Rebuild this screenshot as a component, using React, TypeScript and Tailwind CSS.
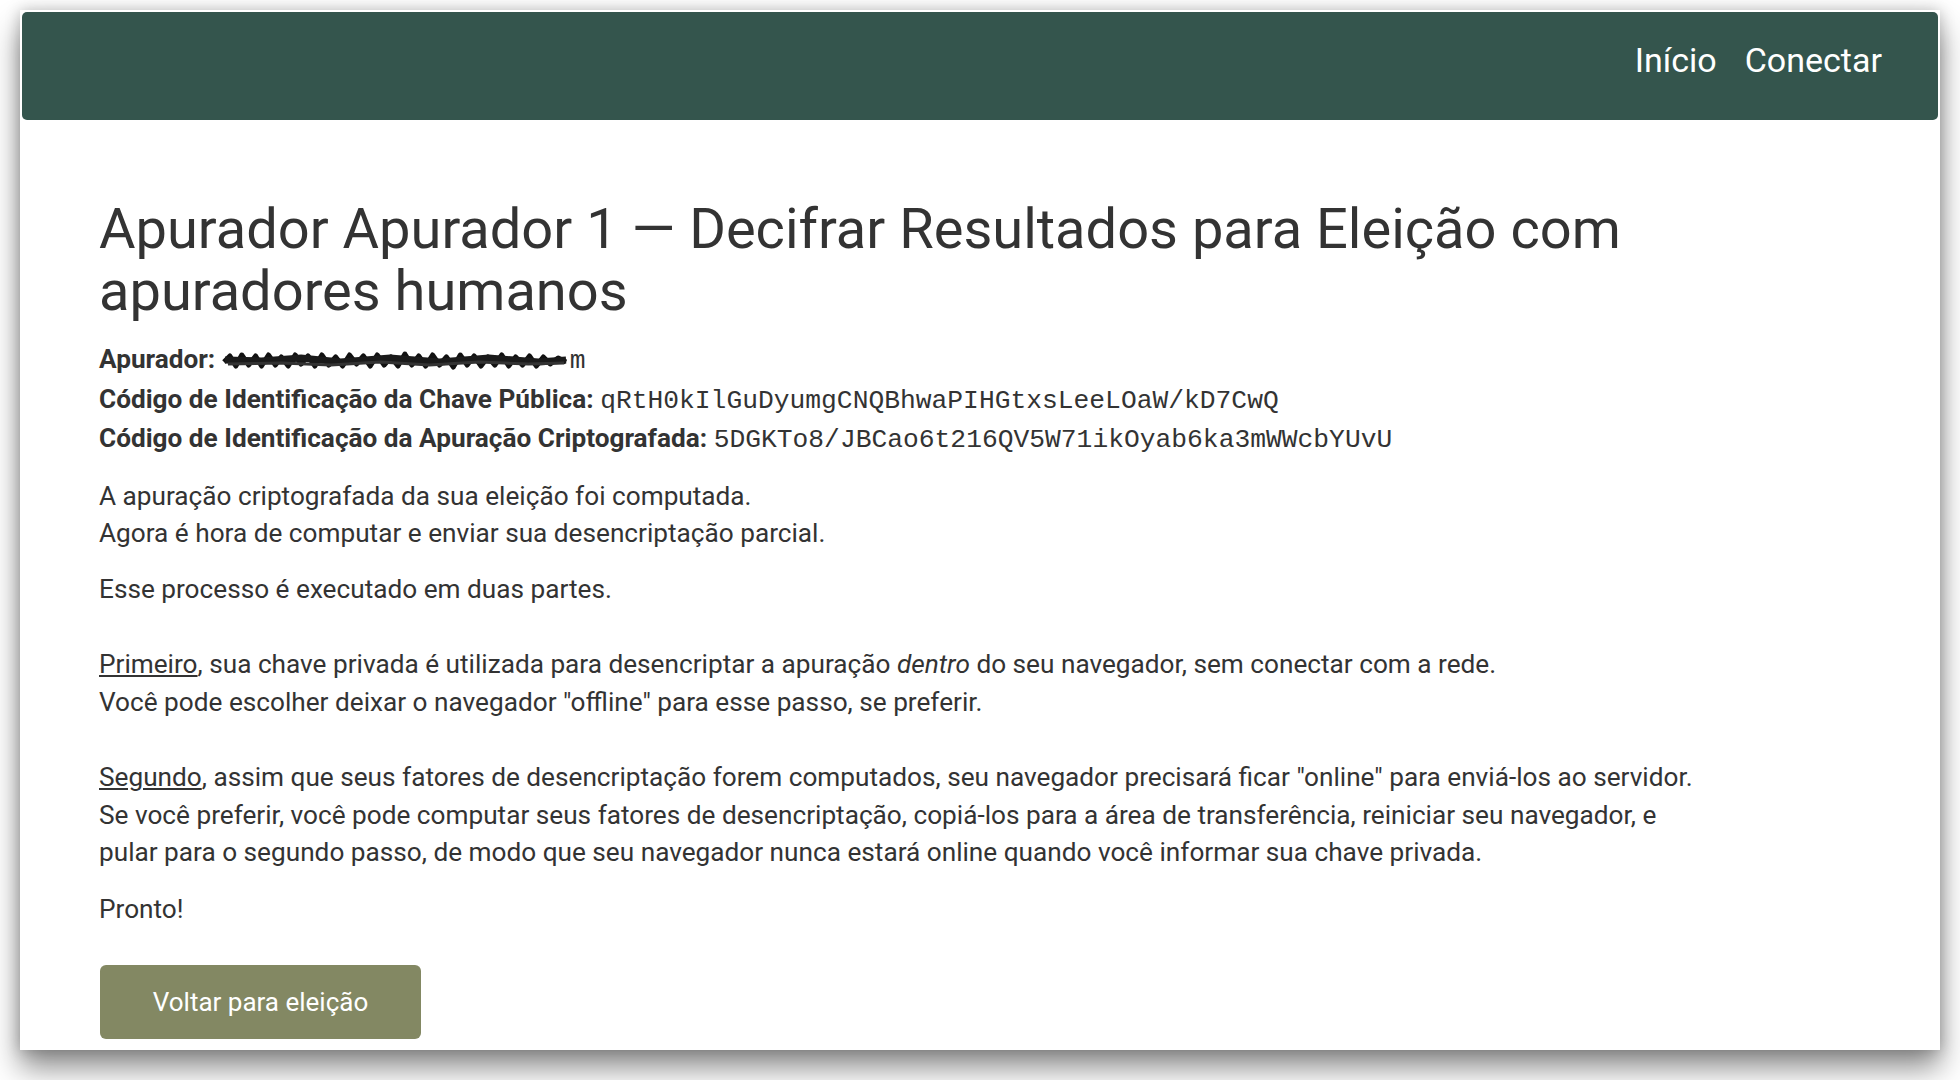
import React from 'react';

const body = "font-['Roboto','Liberation_Sans',sans-serif]";
const mono = "font-['Liberation_Mono',monospace] text-[26.3px] leading-none";

function Scribble() {
  // redacted e-mail: a black scribble drawn over the address
  return (
    <svg width="348" height="24" viewBox="0 0 352 24" preserveAspectRatio="none" className="inline-block align-[-5px]">
      <path
        d="M2 13 L8 7 L14 17 L20 6 L27 16 L34 7 L40 17 L47 6 L54 16 L60 8 L67 17 L74 6 L80 15 L87 7 L94 17 L101 6 L108 16 L115 8 L122 17 L129 6 L136 15 L143 7 L150 17 L157 6 L164 16 L171 8 L178 17 L185 5 L192 16 L199 7 L206 17 L213 6 L220 16 L227 8 L234 18 L241 6 L248 16 L255 7 L262 17 L269 8 L276 16 L283 6 L290 17 L297 8 L304 16 L311 7 L318 17 L325 8 L332 15 L340 9 L348 13"
        fill="none"
        stroke="#111"
        strokeWidth="5"
        strokeLinejoin="round"
      />
      <path
        d="M3 11 L40 12 L80 9 L120 13 L170 9 L220 13 L270 9 L320 13 L348 11"
        fill="none"
        stroke="#1a1a1a"
        strokeWidth="7"
      />
      <path
        d="M6 15 L60 14 L110 16 L160 13 L210 16 L260 13 L310 15 L346 14"
        fill="none"
        stroke="#333"
        strokeWidth="3"
      />
    </svg>
  );
}

export default function App() {
  return (
    <div className={`w-[1960px] h-[1080px] bg-white pt-[10px] px-[20px] ${body}`}>
      <div className="h-[1040px] bg-white shadow-[0_18px_28px_rgba(0,0,0,0.45),0_0_14px_rgba(0,0,0,0.22)] p-[2px]">
        {/* Top bar */}
        <header className="h-[108px] bg-[#34554d] rounded-[5px] flex items-center justify-end gap-[28px] pr-[56px] pb-[13px]">
          <a className="text-white text-[34px] leading-none">Início</a>
          <a className="text-white text-[34px] leading-none">Conectar</a>
        </header>

        <main className="px-[77px] pt-[78px] text-[#333]">
          <h1 className="text-[56px] leading-[62px] font-normal whitespace-nowrap">
            Apurador Apurador 1 — Decifrar Resultados para Eleição com
            <br />
            apuradores humanos
          </h1>

          <div className="mt-[18px] text-[26.2px] leading-[39.5px]">
            <div className="h-[39.5px]">
              <b>Apurador:</b>{' '}
              <span className={mono}>
                <Scribble />m
              </span>
            </div>
            <div className="h-[39.5px]">
              <b>Código de Identificação da Chave Pública:</b>{' '}
              <span className={mono}>qRtH0kIlGuDyumgCNQBhwaPIHGtxsLeeLOaW/kD7CwQ</span>
            </div>
            <div className="h-[39.5px]">
              <b>Código de Identificação da Apuração Criptografada:</b>{' '}
              <span className={mono}>5DGKTo8/JBCao6t216QV5W71ikOyab6ka3mWWcbYUvU</span>
            </div>
          </div>

          <div className="text-[26.2px] leading-[37.5px] whitespace-nowrap">
            <p className="mt-[19px]">
              A apuração criptografada da sua eleição foi computada.
              <br />
              Agora é hora de computar e enviar sua desencriptação parcial.
            </p>
            <p className="mt-[18px]">Esse processo é executado em duas partes.</p>
            <p className="mt-[38px]">
              <u>Primeiro</u>, sua chave privada é utilizada para desencriptar a apuração <i>dentro</i> do seu
              navegador, sem conectar com a rede.
              <br />
              Você pode escolher deixar o navegador "offline" para esse passo, se preferir.
            </p>
            <p className="mt-[38px]">
              <u>Segundo</u>, assim que seus fatores de desencriptação forem computados, seu navegador precisará
              ficar "online" para enviá-los ao servidor.
              <br />
              Se você preferir, você pode computar seus fatores de desencriptação, copiá-los para a área de
              transferência, reiniciar seu navegador, e
              <br />
              pular para o segundo passo, de modo que seu navegador nunca estará online quando você informar sua
              chave privada.
            </p>
            <p className="mt-[19px]">Pronto!</p>
          </div>

          <button className="mt-[37px] ml-[1px] w-[321px] h-[74px] bg-[#838863] rounded-[6px] text-white text-[26px]">
            Voltar para eleição
          </button>
        </main>
      </div>
    </div>
  );
}
